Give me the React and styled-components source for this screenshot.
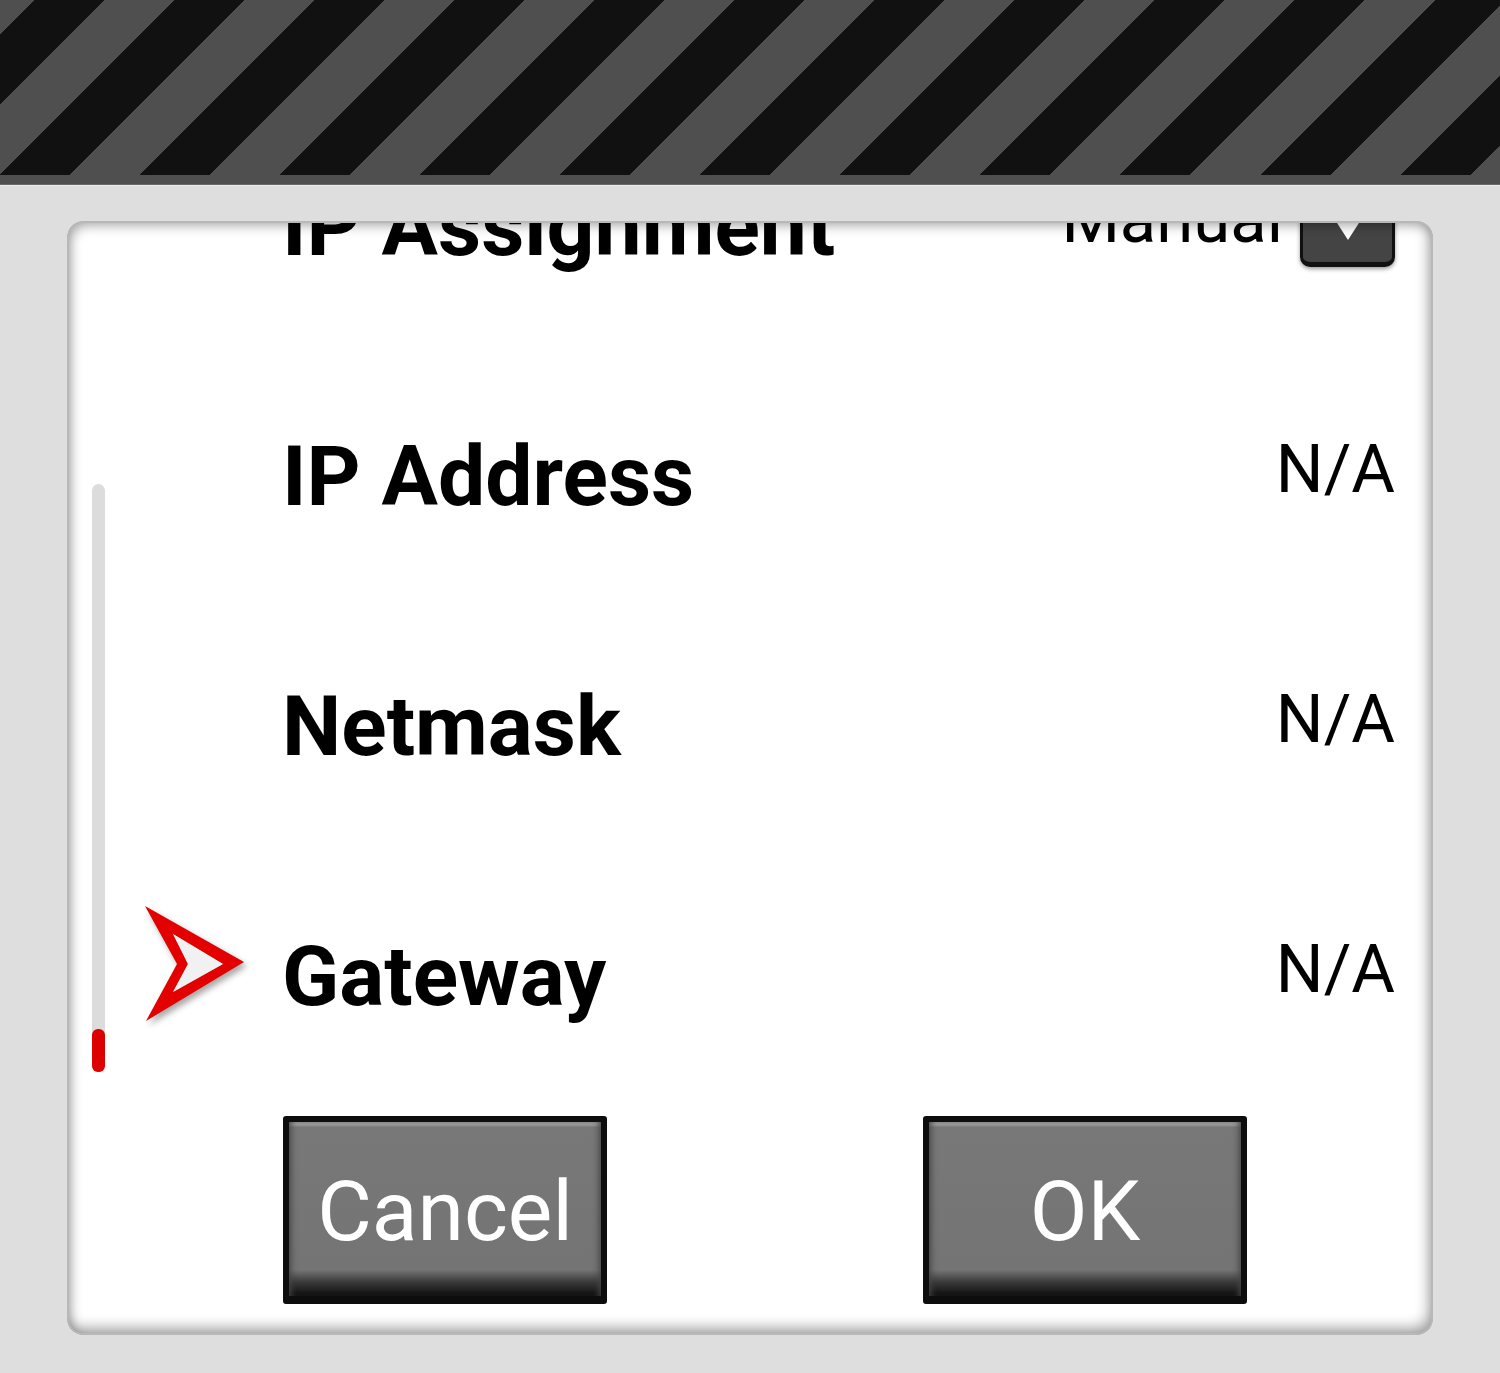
import React from 'react'
import styled, { createGlobalStyle } from 'styled-components'

const GlobalStyle = createGlobalStyle`
  html, body {
    margin: 0;
    padding: 0;
    background: #dedede;
    font-family: Roboto, "Liberation Sans", sans-serif;
  }
`

const rows = [
  { label: 'IP Assignment', value: 'Manual', dropdown: true },
  { label: 'IP Address', value: 'N/A' },
  { label: 'Netmask', value: 'N/A' },
  { label: 'Gateway', value: 'N/A', selected: true },
]

const SelectArrow = () => (
  <svg width="110" height="130" viewBox="0 0 110 130">
    <path
      d="M5 2 L104 58 L6 117 L37 60 Z M33 30 L48 60 L33 88 L83 60 Z"
      fill="#e30000"
      fillRule="evenodd"
    />
    <path d="M33 30 L83 60 L33 88 L48 60 Z" fill="#f1f1f1" />
  </svg>
)

const App = () => {
  return (
    <Page>
      <GlobalStyle />
      <Banner />
      <Content>
        <Card>
          <ScrollArea>
            <List>
              {rows.map((row) => (
                <Row key={row.label}>
                  <Marker>{row.selected && <SelectArrow />}</Marker>
                  <Label>{row.label}</Label>
                  <Value>
                    {row.value}
                    {row.dropdown && (
                      <DropButton>
                        <DropTriangle />
                      </DropButton>
                    )}
                  </Value>
                </Row>
              ))}
            </List>
            <ScrollTrack>
              <ScrollThumb />
            </ScrollTrack>
          </ScrollArea>
          <ButtonBar>
            <Button>Cancel</Button>
            <Button>OK</Button>
          </ButtonBar>
        </Card>
      </Content>
    </Page>
  )
}

export default App

const Page = styled.div`
  width: 1500px;
  height: 1373px;
  display: flex;
  flex-direction: column;
  background: #dedede;
  overflow: hidden;
`

const Banner = styled.div`
  height: 175px;
  flex: none;
  background: repeating-linear-gradient(
    135deg,
    #4f4f4f 0 24.7px,
    #111111 24.7px 74.2px,
    #4f4f4f 74.2px 99px
  );
  border-bottom: 9px solid #4f4f4f;
  box-shadow: 0 1px 0 #6a6a6a, 0 2px 0 #ececec;
`

const Content = styled.div`
  flex: 1;
  display: flex;
  padding: 37px 67px 38px;
`

const Card = styled.div`
  position: relative;
  flex: 1;
  display: flex;
  flex-direction: column;
  background: #fff;
  border-radius: 16px;
  overflow: hidden;

  &::after {
    content: '';
    position: absolute;
    inset: 0;
    border-radius: 16px;
    pointer-events: none;
    box-shadow: inset 0 0 0 2px #b8b8b8, inset 4px 5px 12px rgba(0, 0, 0, 0.3),
      inset -4px -7px 14px rgba(0, 0, 0, 0.36);
  }
`

const ScrollArea = styled.div`
  position: relative;
  flex: 1;
  overflow: hidden;
`

const List = styled.div`
  margin-top: -127px;
  display: flex;
  flex-direction: column;
`

const Row = styled.div`
  height: 250px;
  display: flex;
  align-items: center;
  padding: 0 38px 0 73px;
`

const Marker = styled.div`
  width: 110px;
  height: 130px;
  margin-right: 35px;
  flex: none;

  svg {
    display: block;
    filter: drop-shadow(3px 4px 3px rgba(0, 0, 0, 0.35));
  }
`

const Label = styled.div`
  flex: 1;
  font-size: 84px;
  line-height: 1;
  font-weight: 700;
  color: #000;
  margin-top: 15px;
  margin-left: -3px;
`

const Value = styled.div`
  display: flex;
  align-items: center;
  font-size: 67px;
  line-height: 1;
  font-weight: 400;
  color: #000;
`

const DropButton = styled.div`
  width: 95px;
  height: 80px;
  box-sizing: border-box;
  margin: 16px 0 0 17px;
  background: #444;
  border: 3px solid #111;
  border-bottom-width: 5px;
  border-radius: 10px;
  box-shadow: 0 2px 4px rgba(0, 0, 0, 0.4);
  display: flex;
  align-items: center;
  justify-content: center;
`

const DropTriangle = styled.div`
  width: 0;
  height: 0;
  border-left: 18px solid transparent;
  border-right: 18px solid transparent;
  border-top: 28px solid #fff;
`

const ScrollTrack = styled.div`
  position: absolute;
  left: 25px;
  top: 263px;
  width: 13px;
  height: 588px;
  border-radius: 7px;
  background: #dcdcdc;
  display: flex;
  align-items: flex-end;
`

const ScrollThumb = styled.div`
  width: 13px;
  height: 43px;
  border-radius: 6px;
  background: #dd0000;
`

const ButtonBar = styled.div`
  display: flex;
  gap: 316px;
  padding: 0 0 31px 216px;
`

const Button = styled.div`
  width: 324px;
  height: 188px;
  box-sizing: border-box;
  display: flex;
  align-items: center;
  justify-content: center;
  border: 6px solid #0d0d0d;
  border-bottom-width: 8px;
  border-radius: 3px;
  background: linear-gradient(
    to bottom,
    #9a9a9a 0 3px,
    #787878 5px,
    #747474 calc(100% - 26px),
    #3a3a3a calc(100% - 14px),
    #0d0d0d 100%
  );
  box-shadow: inset 6px 0 6px -4px #444, inset -6px 0 6px -4px #444;
  color: #fff;
  font-size: 84px;
  font-weight: 400;
  line-height: 1;
  padding-top: 6px;
`
